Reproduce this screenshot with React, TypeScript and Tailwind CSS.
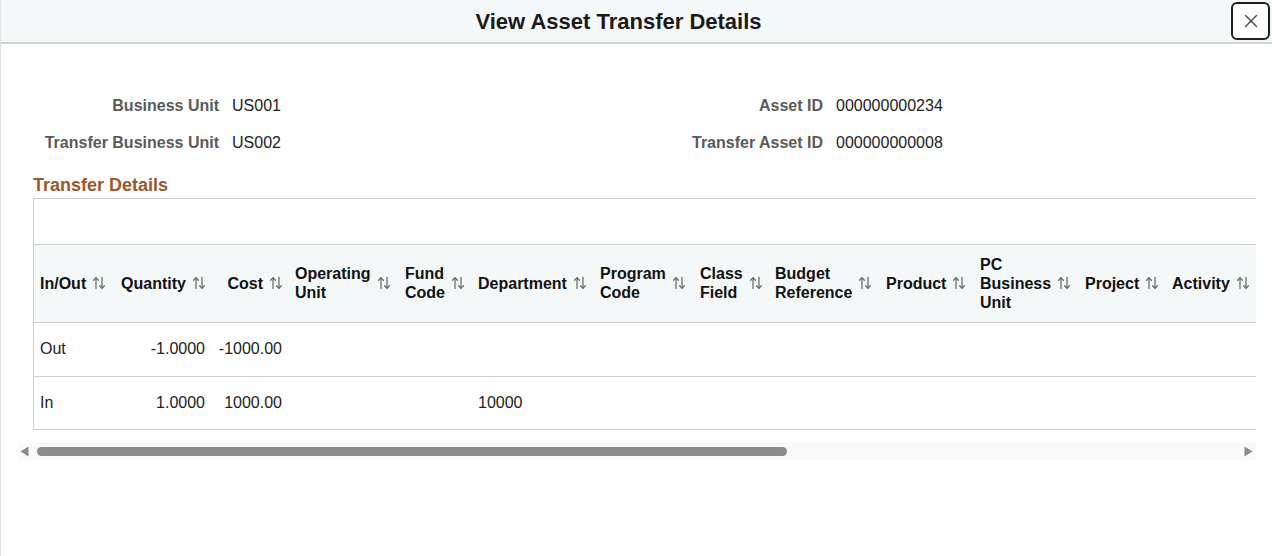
import React from "react";

function SortIcon() {
  return (
    <svg width="14" height="14" viewBox="0 0 14 14" className="shrink-0" fill="none" stroke="#6e6e6e" strokeWidth="1.3" strokeLinecap="round" strokeLinejoin="round">
      <path d="M4 12.5V1.8" />
      <path d="M1.6 4.3L4 1.8L6.4 4.3" />
      <path d="M10 1.5V12.2" />
      <path d="M7.6 9.7L10 12.2L12.4 9.7" />
    </svg>
  );
}

type Col = { lines: string[]; w: number; right?: boolean };

const cols: Col[] = [
  { lines: ["In/Out"], w: 80 },
  { lines: ["Quantity"], w: 98, right: true },
  { lines: ["Cost"], w: 77, right: true },
  { lines: ["Operating", "Unit"], w: 110 },
  { lines: ["Fund", "Code"], w: 73 },
  { lines: ["Department"], w: 122 },
  { lines: ["Program", "Code"], w: 100 },
  { lines: ["Class", "Field"], w: 75 },
  { lines: ["Budget", "Reference"], w: 111 },
  { lines: ["Product"], w: 94 },
  { lines: ["PC", "Business", "Unit"], w: 105 },
  { lines: ["Project"], w: 87 },
  { lines: ["Activity"], w: 100 },
];

const rows: string[][] = [
  ["Out", "-1.0000", "-1000.00", "", "", "", "", "", "", "", "", "", ""],
  ["In", "1.0000", "1000.00", "", "", "10000", "", "", "", "", "", "", ""],
];

export default function App() {
  return (
    <div className="relative h-[556px] w-[1272px] overflow-hidden bg-white border-l border-[#e2e2e2] font-['Liberation_Sans',Arial,sans-serif]">
      {/* Header */}
      <div className="relative flex h-[44px] items-center justify-center border-b-2 border-[#d4d4d4] bg-[#f5f8f9] pr-[36px]">
        <h1 className="text-[22px] font-bold text-[#1a1a1a]">View Asset Transfer Details</h1>
        <button className="absolute right-[2px] top-[2px] flex h-[38px] w-[39px] items-center justify-center rounded-[6px] border-2 border-[#1f1f1f] bg-white">
          <svg width="14" height="14" viewBox="0 0 14 14" fill="none" stroke="#4a4a4a" strokeWidth="1.4" strokeLinecap="round">
            <path d="M1.5 1.5L12.5 12.5" />
            <path d="M12.5 1.5L1.5 12.5" />
          </svg>
        </button>
      </div>

      {/* Fields */}
      <div className="mt-[43px] flex text-[16px]">
        <div className="w-[603px]">
          <div className="flex h-[37px] items-center">
            <span className="w-[218px] text-right font-bold text-[#5a5a5a]">Business Unit</span>
            <span className="ml-[13px] text-[#222]">US001</span>
          </div>
          <div className="flex h-[37px] items-center">
            <span className="w-[218px] text-right font-bold text-[#5a5a5a]">Transfer Business Unit</span>
            <span className="ml-[13px] text-[#222]">US002</span>
          </div>
        </div>
        <div>
          <div className="flex h-[37px] items-center">
            <span className="w-[219px] text-right font-bold text-[#5a5a5a]">Asset ID</span>
            <span className="ml-[13px] text-[#222]">000000000234</span>
          </div>
          <div className="flex h-[37px] items-center">
            <span className="w-[219px] text-right font-bold text-[#5a5a5a]">Transfer Asset ID</span>
            <span className="ml-[13px] text-[#222]">000000000008</span>
          </div>
        </div>
      </div>

      {/* Section title */}
      <div className="ml-[32px] mt-[14px] flex h-[20px] items-center text-[18px] font-bold text-[#a0552a]">
        Transfer Details
      </div>

      {/* Grid */}
      <div className="ml-[32px] mt-[3px] w-[1223px] overflow-hidden border-l border-t border-b border-[#cfcfcf]">
        <div className="h-[46px] border-b border-[#cfcfcf] bg-white" />
        <table className="table-fixed border-collapse text-[16px]" style={{ width: cols.reduce((a, c) => a + c.w, 0) }}>
          <colgroup>
            {cols.map((c, i) => (
              <col key={i} style={{ width: c.w }} />
            ))}
          </colgroup>
          <thead>
            <tr className="h-[77px] bg-[#f5f8f9]">
              {cols.map((c, i) => (
                <th key={i} className={`align-middle font-bold text-[#111] ${i === 0 ? "pl-[6px] pr-[6px]" : "px-[6px]"}`}>
                  <div className={`flex items-center gap-[6px] ${c.right ? "justify-end" : "justify-start"}`}>
                    <span className="whitespace-nowrap text-left leading-[19px]">
                      {c.lines.map((l, j) => (
                        <span key={j} className="block">
                          {l}
                        </span>
                      ))}
                    </span>
                    <SortIcon />
                  </div>
                </th>
              ))}
            </tr>
          </thead>
          <tbody>
            {rows.map((r, ri) => (
              <tr key={ri} className={`${ri === 0 ? "h-[54px]" : "h-[53px]"} border-t border-[#cfcfcf]`}>
                {r.map((v, ci) => (
                  <td
                    key={ci}
                    className={`align-middle text-[#222] whitespace-nowrap ${ci === 0 ? "pl-[6px] pr-[6px]" : cols[ci].right ? "pl-[6px] pr-[7px]" : "px-[6px]"} ${
                      cols[ci].right ? "text-right" : "text-left"
                    }`}
                  >
                    {v}
                  </td>
                ))}
              </tr>
            ))}
          </tbody>
        </table>
      </div>

      {/* Scrollbar */}
      <div className="ml-[17px] mt-[13px] flex h-[17px] w-[1238px] items-center bg-[#fafafa]">
        <svg width="9" height="11" viewBox="0 0 9 11" className="ml-[2px]">
          <path d="M8.5 0.5V10.5L0.5 5.5Z" fill="#8a8a8a" />
        </svg>
        <div className="ml-[8px] h-[9px] w-[750px] rounded-full bg-[#8c8c8c]" />
        <div className="flex-1" />
        <svg width="9" height="11" viewBox="0 0 9 11" className="mr-[3px]">
          <path d="M0.5 0.5V10.5L8.5 5.5Z" fill="#8a8a8a" />
        </svg>
      </div>
    </div>
  );
}
